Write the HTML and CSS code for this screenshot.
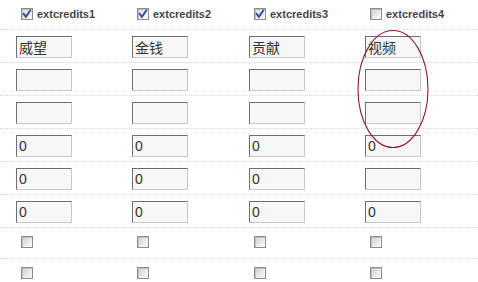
FILE: index.html
```html
<!DOCTYPE html>
<html>
<head>
<meta charset="utf-8">
<link rel="stylesheet" href="styles.css">
</head>
<body>
<div class="sheet">
  <div class="row head">
    <label class="cell"><span class="cb on"><svg viewBox="0 0 13 13"><path d="M3 6.5 L5.3 9.5 L10 2.8" /></svg></span><span class="lbl">extcredits1</span></label>
    <label class="cell"><span class="cb on"><svg viewBox="0 0 13 13"><path d="M3 6.5 L5.3 9.5 L10 2.8" /></svg></span><span class="lbl">extcredits2</span></label>
    <label class="cell"><span class="cb on"><svg viewBox="0 0 13 13"><path d="M3 6.5 L5.3 9.5 L10 2.8" /></svg></span><span class="lbl">extcredits3</span></label>
    <label class="cell"><span class="cb"></span><span class="lbl">extcredits4</span></label>
  </div>
  <div class="row field">
    <div class="cell"><input class="txt" type="text" value="威望"></div>
    <div class="cell"><input class="txt" type="text" value="金钱"></div>
    <div class="cell"><input class="txt" type="text" value="贡献"></div>
    <div class="cell"><input class="txt" type="text" value="视频"></div>
  </div>
  <div class="row field">
    <div class="cell"><input class="txt" type="text" value=""></div>
    <div class="cell"><input class="txt" type="text" value=""></div>
    <div class="cell"><input class="txt" type="text" value=""></div>
    <div class="cell"><input class="txt" type="text" value=""></div>
  </div>
  <div class="row field">
    <div class="cell"><input class="txt" type="text" value=""></div>
    <div class="cell"><input class="txt" type="text" value=""></div>
    <div class="cell"><input class="txt" type="text" value=""></div>
    <div class="cell"><input class="txt" type="text" value=""></div>
  </div>
  <div class="row field">
    <div class="cell"><input class="txt" type="text" value="0"></div>
    <div class="cell"><input class="txt" type="text" value="0"></div>
    <div class="cell"><input class="txt" type="text" value="0"></div>
    <div class="cell"><input class="txt" type="text" value="0"></div>
  </div>
  <div class="row field">
    <div class="cell"><input class="txt" type="text" value="0"></div>
    <div class="cell"><input class="txt" type="text" value="0"></div>
    <div class="cell"><input class="txt" type="text" value="0"></div>
    <div class="cell"><input class="txt" type="text" value=""></div>
  </div>
  <div class="row field">
    <div class="cell"><input class="txt" type="text" value="0"></div>
    <div class="cell"><input class="txt" type="text" value="0"></div>
    <div class="cell"><input class="txt" type="text" value="0"></div>
    <div class="cell"><input class="txt" type="text" value="0"></div>
  </div>
  <div class="row check">
    <div class="cell"><span class="cb"></span></div>
    <div class="cell"><span class="cb"></span></div>
    <div class="cell"><span class="cb"></span></div>
    <div class="cell"><span class="cb"></span></div>
  </div>
  <div class="row check">
    <div class="cell"><span class="cb"></span></div>
    <div class="cell"><span class="cb"></span></div>
    <div class="cell"><span class="cb"></span></div>
    <div class="cell"><span class="cb"></span></div>
  </div>
  <svg class="mark" width="74" height="122" viewBox="0 0 74 122"><ellipse cx="37" cy="61" rx="35" ry="58.5" /></svg>
</div>
</body>
</html>
```
FILE: styles.css
```css
html, body {
  margin: 0;
  padding: 0;
  background: #ffffff;
}
body {
  width: 478px;
  height: 282px;
  overflow: hidden;
  font-family: "Liberation Sans", Arial, "Noto Sans CJK SC", sans-serif;
  color: #444;
}
.sheet {
  position: relative;
  display: flex;
  flex-direction: column;
}
.row {
  display: grid;
  grid-template-columns: 116px 117px 116px 1fr;
  border-bottom: 1px dotted #ccd8e0;
  box-sizing: border-box;
}
.row.head {
  height: 30px;
  align-items: start;
  padding-top: 8px;
}
.row.field {
  height: 33px;
  padding-top: 6px;
}
.row.check {
  height: 31px;
  padding-top: 8px;
}
.cell {
  display: flex;
  align-items: center;
}
.head .cell {
  padding-left: 21px;
  gap: 4px;
}
.field .cell {
  padding-left: 16px;
  align-items: flex-start;
}
.check .cell {
  padding-left: 21px;
  align-items: flex-start;
}
.lbl {
  font-weight: bold;
  font-size: 11px;
  color: #454545;
  line-height: 12px;
}
.cb {
  display: block;
  width: 12px;
  height: 12px;
  box-sizing: border-box;
  border: 1px solid #8c8c8c;
  background: linear-gradient(135deg, #cfcfcf 0%, #e4e4e4 45%, #fbfbfb 100%);
  box-shadow: inset 1px 1px 0 #c0c0c0, inset -1px -1px 0 #f4f4f4;
  position: relative;
}
.cb.on {
  background: linear-gradient(135deg, #dcdcdc 0%, #ececec 50%, #fbfbfb 100%);
}
.cb svg {
  position: absolute;
  left: -1px;
  top: -1px;
  width: 12px;
  height: 12px;
}
.cb svg path {
  fill: none;
  stroke: #2f4fa6;
  stroke-width: 2.2;
  stroke-linecap: square;
  stroke-linejoin: miter;
}
.txt {
  display: block;
  margin: 0;
  width: 56px;
  height: 22px;
  box-sizing: border-box;
  padding: 0 0 0 2px;
  border-style: solid;
  border-width: 1px;
  border-color: #6e6e6e #c8c8c8 #c8c8c8 #6e6e6e;
  background: #f7f7f7;
  font-family: "Liberation Sans", Arial, "Noto Sans CJK SC", sans-serif;
  font-size: 14px;
  color: #333;
  outline: none;
}
.mark {
  position: absolute;
  left: 356px;
  top: 28px;
  overflow: visible;
}
.mark ellipse {
  fill: none;
  stroke: #8e1b2b;
  stroke-width: 1.1;
}
```
